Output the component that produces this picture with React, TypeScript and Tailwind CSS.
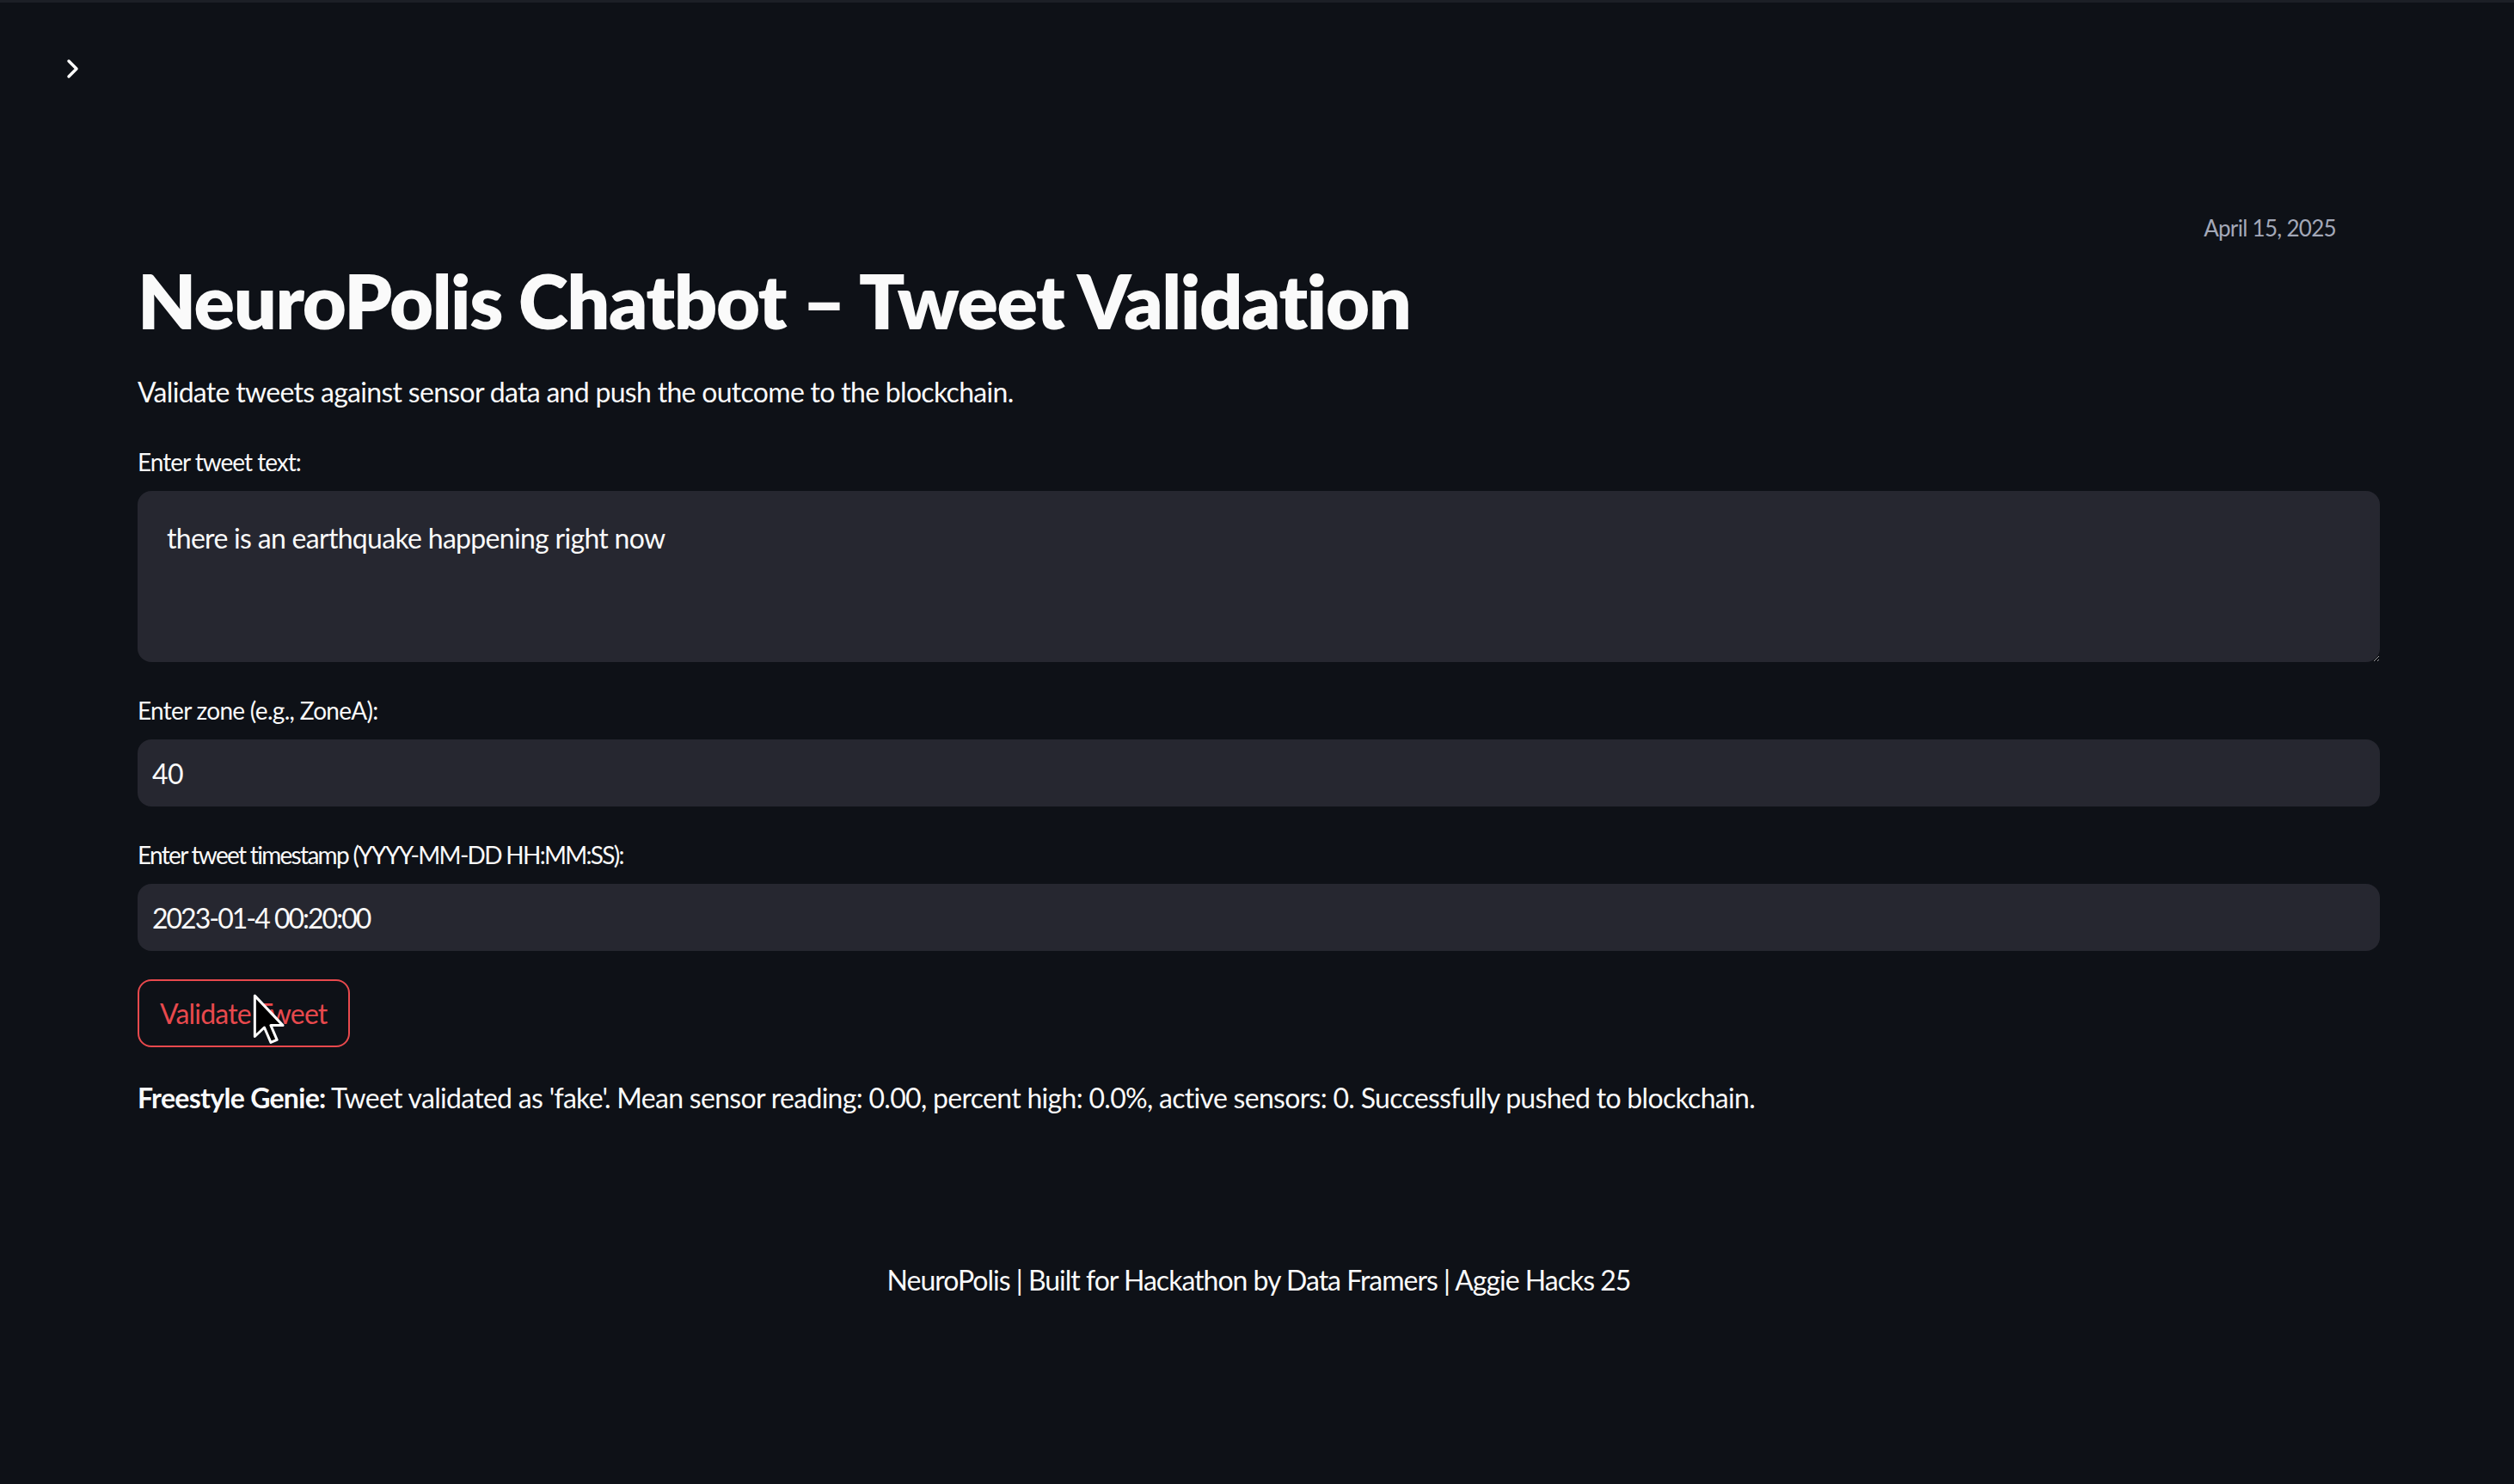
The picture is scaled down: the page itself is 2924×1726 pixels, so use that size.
import React from 'react';

const font = { fontFamily: 'Lato, "Noto Sans", sans-serif' };

function Field({
  label,
  value,
  labelClass,
  valueClass,
}: {
  label: string;
  value: string;
  labelClass: string;
  valueClass: string;
}) {
  return (
    <div className="mt-[34px]">
      <label className={`block h-[45px] text-[28px] leading-[45px] text-[#fafafa] ${labelClass}`}>{label}</label>
      <input
        type="text"
        readOnly
        defaultValue={value}
        className={`mt-[11px] block h-[78px] w-full rounded-[16px] bg-[#262730] px-[17px] text-[32px] text-[#fafafa] outline-none ${valueClass}`}
      />
    </div>
  );
}

export default function App() {
  return (
    <div className="min-h-[1726px] w-full bg-[#0e1117] text-[#fafafa]" style={font}>
      {/* header with collapsed sidebar toggle */}
      <div className="h-[120px] border-t-[3px] border-[#1c1f26] pl-[77px] pt-[65px]">
        <svg width="16" height="24" viewBox="0 0 16 24" fill="none">
          <path d="M3 3 L12 12 L3 21" stroke="#fafafa" strokeWidth="3.5" strokeLinecap="round" strokeLinejoin="round" />
        </svg>
      </div>

      <div className="pl-[160px] pr-[156px]">
        <div className="flex justify-end pr-[51px] pt-[127px]">
          <span className="h-[36px] text-[26px] leading-[36px] tracking-[-0.7px] text-[#a3a8b8]">April 15, 2025</span>
        </div>

        <h1 className="mt-[13px] h-[106px] text-[88px] font-extrabold leading-[106px] tracking-[-1.4px]">
          NeuroPolis Chatbot – Tweet Validation
        </h1>

        <p className="mt-[28px] h-[51px] text-[32px] leading-[51px] tracking-[-0.7px]">
          Validate tweets against sensor data and push the outcome to the blockchain.
        </p>

        <div className="mt-[34px]">
          <label className="block h-[45px] text-[28px] leading-[45px] tracking-[-1px]">Enter tweet text:</label>
          <textarea
            readOnly
            defaultValue="there is an earthquake happening right now"
            className="mt-[11px] block h-[199px] w-full resize-y rounded-[16px] bg-[#262730] px-[34px] py-[31px] text-[32px] leading-[48px] tracking-[-0.7px] text-[#fafafa] outline-none"
          />
        </div>

        <Field
          label="Enter zone (e.g., ZoneA):"
          value="40"
          labelClass="tracking-[-0.7px]"
          valueClass="tracking-[-0.6px]"
        />
        <Field
          label="Enter tweet timestamp (YYYY-MM-DD HH:MM:SS):"
          value="2023-01-4 00:20:00"
          labelClass="tracking-[-1.7px]"
          valueClass="tracking-[-2px]"
        />

        <div className="relative mt-[33px] w-fit">
          <button
            type="button"
            className="h-[79px] rounded-[16px] border-2 border-[#e8494d] bg-[#0e1117] px-[24px] text-[32px] tracking-[-0.8px] text-[#e8494d]"
          >
            Validate Tweet
          </button>
          {/* mouse pointer */}
          <svg
            className="absolute left-[134px] top-[17px]"
            width="38"
            height="60"
            viewBox="0 0 12.5 20"
          >
            <path
              d="M0.7 0.7 L0.7 16.5 L4.4 13 L6.9 18.8 L9.3 17.8 L6.9 12.2 L11.6 12.2 Z"
              fill="#000"
              stroke="#fff"
              strokeWidth="1"
              strokeLinejoin="round"
            />
          </svg>
        </div>

        <p className="mt-[33px] h-[51px] text-[32px] leading-[51px] tracking-[-0.7px]">
          <span className="font-bold">Freestyle Genie:</span> Tweet validated as 'fake'. Mean sensor reading: 0.00,
          percent high: 0.0%, active sensors: 0. Successfully pushed to blockchain.
        </p>

        <p className="mt-[161px] text-center text-[32px] leading-[51px] tracking-[-1px]">
          NeuroPolis | Built for Hackathon by Data Framers | Aggie Hacks 25
        </p>
      </div>
    </div>
  );
}
